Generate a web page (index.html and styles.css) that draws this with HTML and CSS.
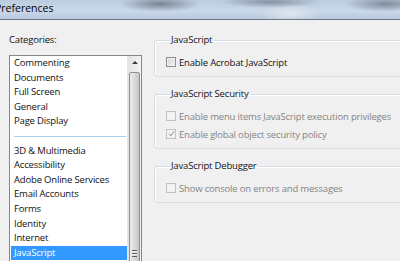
FILE: index.html
```html
<!DOCTYPE html>
<html>
<head>
    <title>Preferences</title>
    <meta charset="utf-8" />
    <link rel="stylesheet" href="styles.css">
</head>
<body>
    <div class="titlebar"><span class="title">Preferences</span></div>
    <div class="dialog">
        <div class="categories">
            <div class="cat-label">Categories:</div>
            <div class="listbox">
                <ul class="items">
                    <li>Commenting</li>
                    <li>Documents</li>
                    <li>Full Screen</li>
                    <li>General</li>
                    <li>Page Display</li>
                    <li class="sep"></li>
                    <li>3D &amp; Multimedia</li>
                    <li>Accessibility</li>
                    <li>Adobe Online Services</li>
                    <li>Email Accounts</li>
                    <li>Forms</li>
                    <li>Identity</li>
                    <li>Internet</li>
                    <li class="selected">JavaScript</li>
                </ul>
                <div class="scrollbar">
                    <div class="arrow"></div>
                    <div class="thumb"><div class="grip"></div></div>
                </div>
            </div>
        </div>
        <div class="panel">
            <fieldset class="group">
                <legend>JavaScript</legend>
                <label class="check"><span class="box"></span><span>Enable Acrobat <u>J</u>avaScript</span></label>
            </fieldset>
            <fieldset class="group">
                <legend>JavaScript Security</legend>
                <label class="check disabled"><span class="box"></span><span>Enable menu items JavaScript execution privileges</span></label>
                <label class="check disabled"><span class="box checked"></span><span>Enable global object security policy</span></label>
            </fieldset>
            <fieldset class="group">
                <legend>JavaScript Debugger</legend>
                <label class="check disabled"><span class="box"></span><span>Show console on errors and messages</span></label>
            </fieldset>
        </div>
    </div>
</body>
</html>
```
FILE: styles.css
```css
body {
    margin: 0;
    width: 400px;
    height: 261px;
    overflow: hidden;
    background-color: #f0f0f0;
    font-family: "Open Sans", "Noto Sans", sans-serif;
    font-size: 9.5px;
    letter-spacing: -0.18px;
    color: #111;
}

.titlebar {
    height: 19px;
    border-bottom: 1px solid #6e7885;
    background:
        radial-gradient(ellipse 40px 8px at 160px 4px, rgba(60,70,85,0.55), transparent),
        radial-gradient(ellipse 50px 6px at 270px 2px, rgba(60,70,85,0.45), transparent),
        radial-gradient(ellipse 30px 10px at 290px 14px, rgba(230,235,240,0.8), transparent),
        radial-gradient(ellipse 40px 8px at 385px 4px, rgba(60,70,85,0.5), transparent),
        linear-gradient(to bottom, #bccde0, #c9d8e8 60%, #b7c8dc);
}

.title {
    display: block;
    margin-left: -5px;
    line-height: 17px;
    font-size: 10.5px;
    letter-spacing: 0;
    color: #000;
}

.dialog {
    display: flex;
    gap: 12px;
    padding: 13px 0 0 9px;
}

.categories {
    width: 133px;
    flex: none;
}

.cat-label {
    line-height: 14px;
    margin-bottom: 8px;
}

.listbox {
    display: flex;
    height: 220px;
    border: 1px solid #828790;
    background-color: #fff;
}

.items {
    list-style: none;
    margin: 0;
    padding: 0 0 0 1px;
    flex: 1;
}

.items li {
    height: 14.6px;
    line-height: 14.6px;
    padding-left: 3px;
}

.items li.sep {
    display: flex;
    align-items: center;
}

.items li.sep::after {
    content: "";
    flex: 1;
    height: 1px;
    margin-right: 1px;
    background-color: #a9cdef;
}

.items li.selected {
    background-color: #3399ff;
    color: #fff;
}

.scrollbar {
    width: 13px;
    border-left: 1px solid #e6e6e6;
    background: linear-gradient(to right, #e3e3e3, #f4f4f4);
}

.arrow {
    height: 16px;
    position: relative;
}

.arrow::after {
    content: "";
    position: absolute;
    left: 4px;
    top: 5px;
    border-left: 3px solid transparent;
    border-right: 3px solid transparent;
    border-bottom: 3px solid #3c3c3c;
}

.thumb {
    margin: 0 1px;
    height: 210px;
    border: 1px solid #8f8f8f;
    border-radius: 2px;
    background: linear-gradient(to right, #ececec, #dadada 50%, #c6c6c6);
    position: relative;
}

.grip {
    position: absolute;
    left: 2px;
    right: 2px;
    top: 177px;
    height: 7px;
    background: repeating-linear-gradient(to bottom, #5a5a5a 0 1px, #f4f4f4 1px 2px, transparent 2px 3px);
}

.panel {
    width: 280px;
    flex: none;
    display: flex;
    flex-direction: column;
    gap: 10px;
}

.group {
    margin: 0;
    padding: 6px 0 5px 11px;
    border: 1px solid #d5dfe5;
    border-radius: 3px;
    box-shadow: inset 1px 1px #fff;
}

.group legend {
    padding: 0 1px;
    margin-left: 4px;
    line-height: 14px;
}

.check {
    display: flex;
    align-items: center;
    height: 18px;
}

.check.disabled {
    color: #858585;
}

.box {
    width: 8px;
    height: 8px;
    margin-right: 3px;
    border: 1px solid #8e8f8f;
    background: linear-gradient(135deg, #d6d6d6, #f4f4f4);
    box-shadow: inset 0 0 0 1px #f0f0f0;
    position: relative;
}

.disabled .box {
    border-color: #c3c3c3;
    background: #f4f4f4;
}

.box.checked::after {
    content: "";
    position: absolute;
    left: 3px;
    top: 0;
    width: 2px;
    height: 5px;
    border-right: 1px solid #a0a0a0;
    border-bottom: 1px solid #a0a0a0;
    transform: rotate(40deg);
}
```
